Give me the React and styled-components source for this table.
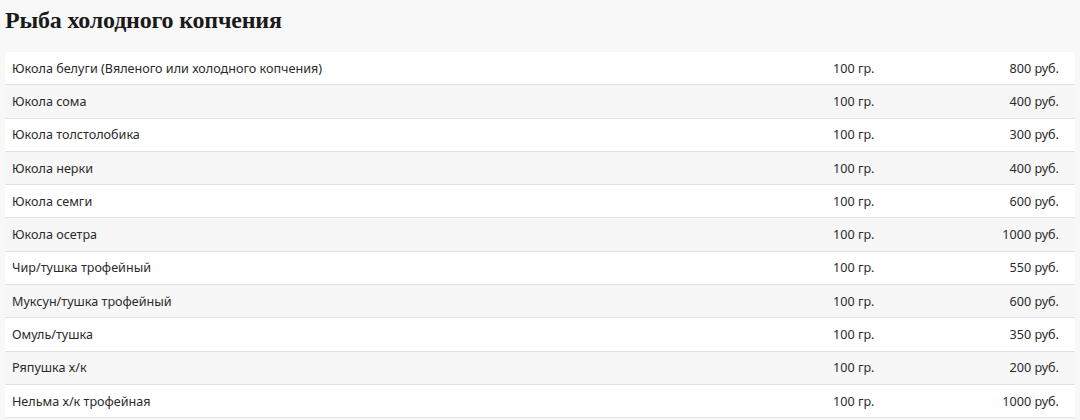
import React from 'react';
import styled, { createGlobalStyle } from 'styled-components';

const GlobalStyle = createGlobalStyle`
    body {
        margin: 0;
        background: #f8f8f8;
        font-family: "Noto Sans", "Liberation Sans", sans-serif;
        color: #222;
    }
`

const Wrapper = styled.div`
    padding: 0 5px;
`

const Title = styled.h2`
    margin: 0;
    height: 52px;
    display: flex;
    align-items: center;
    padding-bottom: 12px;
    box-sizing: border-box;
    font-family: "Liberation Serif", "DejaVu Serif", serif;
    font-size: 24px;
    font-weight: 700;
    color: #1a1a1a;
    letter-spacing: -0.2px;
`

const Table = styled.div`
    display: flex;
    flex-direction: column;
`

const Row = styled.div`
    display: grid;
    grid-template-columns: 1fr 112px 114px;
    align-items: center;
    height: 33.3px;
    box-sizing: border-box;
    padding: 0 16px 0 7px;
    border-bottom: 1px solid #e2e2e2;
    background: ${p => (p.$odd ? '#ffffff' : '#f7f7f7')};
    font-size: 12.6px;
    color: #2a2a2a;
`

const Weight = styled.span``

const Price = styled.span`
    text-align: right;
`

const items = [
    ['Юкола белуги (Вяленого или холодного копчения)', '800 руб.'],
    ['Юкола сома', '400 руб.'],
    ['Юкола толстолобика', '300 руб.'],
    ['Юкола нерки', '400 руб.'],
    ['Юкола семги', '600 руб.'],
    ['Юкола осетра', '1000 руб.'],
    ['Чир/тушка трофейный', '550 руб.'],
    ['Муксун/тушка трофейный', '600 руб.'],
    ['Омуль/тушка', '350 руб.'],
    ['Ряпушка х/к', '200 руб.'],
    ['Нельма х/к трофейная', '1000 руб.'],
]

export default function App() {
    return (
        <Wrapper>
            <GlobalStyle />
            <Title>Рыба холодного копчения</Title>
            <Table>
                {items.map(([name, price], i) => (
                    <Row key={name} $odd={i % 2 === 0}>
                        <span>{name}</span>
                        <Weight>100 гр.</Weight>
                        <Price>{price}</Price>
                    </Row>
                ))}
            </Table>
        </Wrapper>
    );
}
